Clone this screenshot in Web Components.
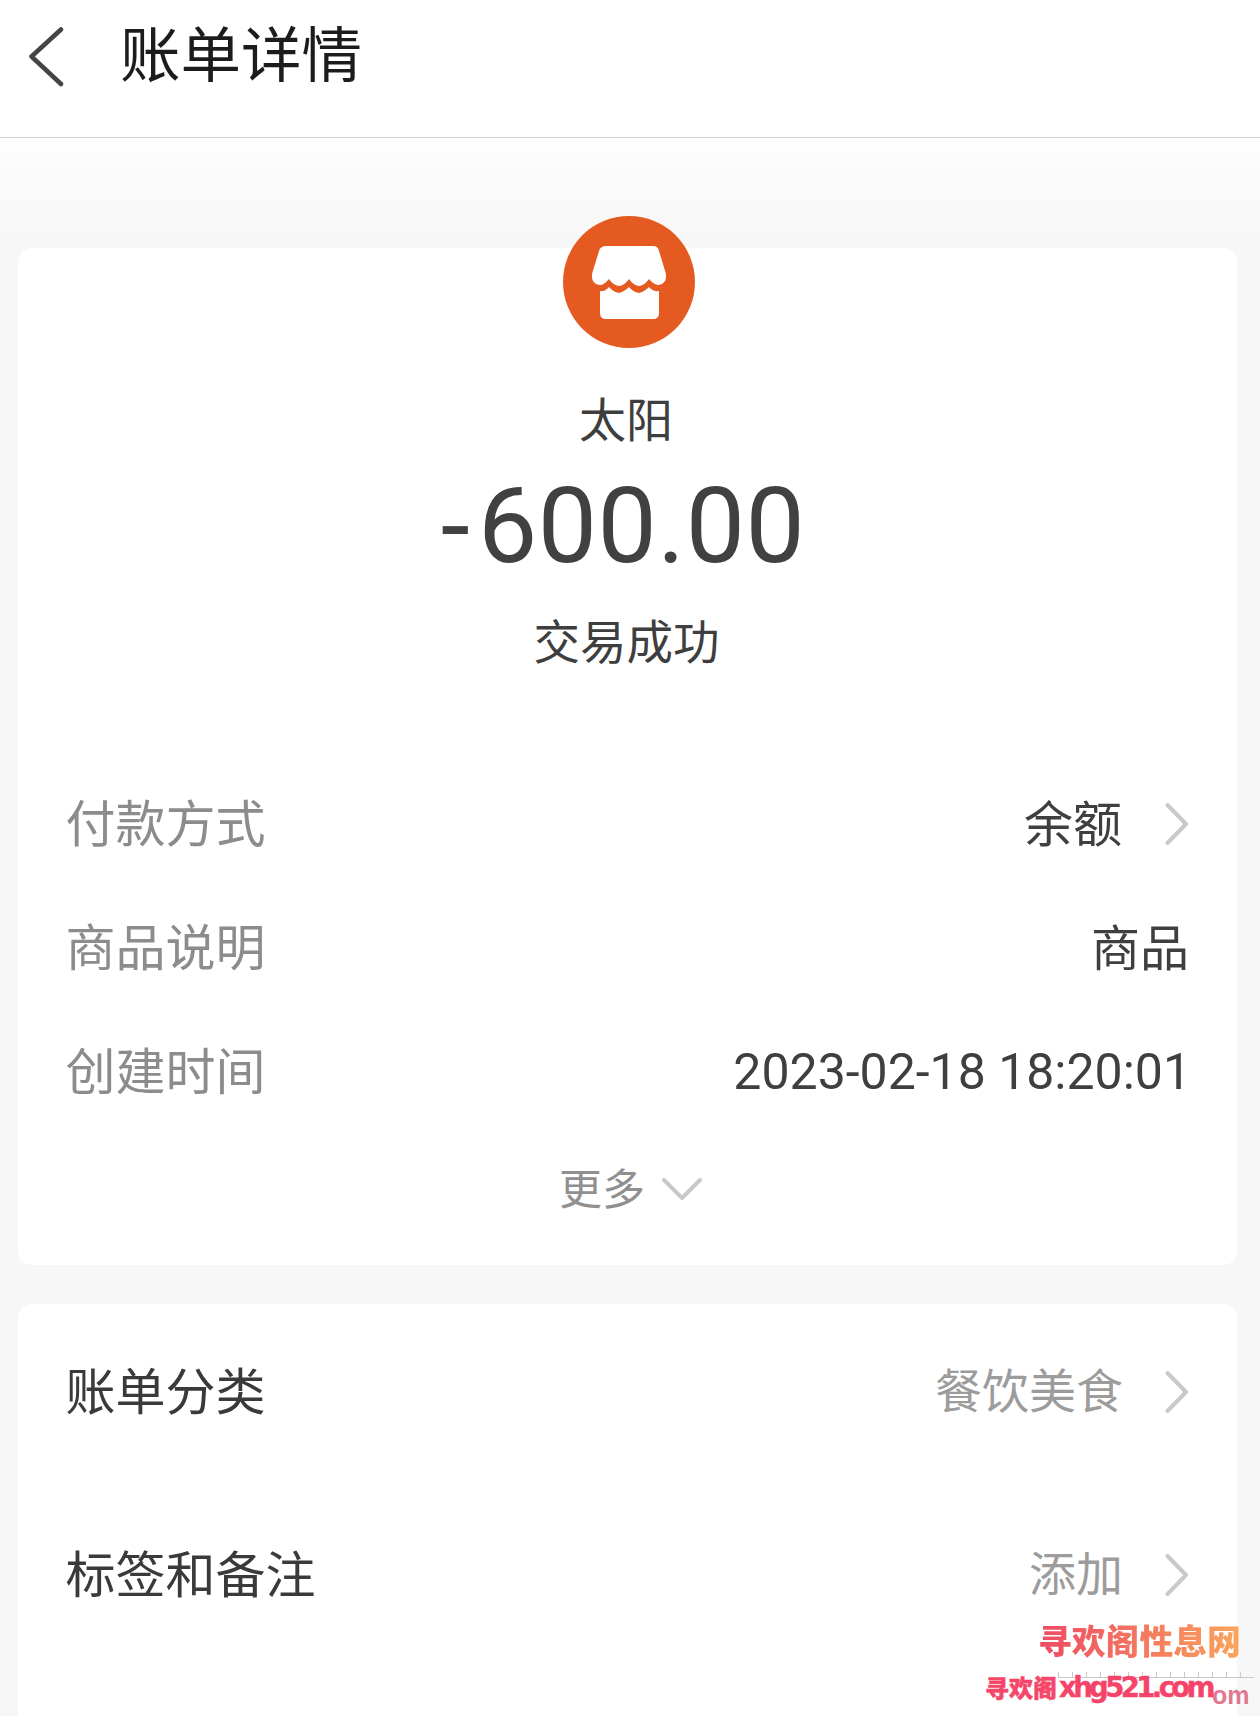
<!doctype html>
<html lang="zh"><head><meta charset="utf-8">
<style>
html,body{margin:0;padding:0}
body{width:1260px;height:1716px;overflow:hidden;position:relative;background:#f7f7f7;font-family:"Noto Sans CJK SC","Noto Sans",sans-serif}
</style></head><body>
<bill-page>
  <bill-header slot="header">账单详情</bill-header>
  <bill-card style="height:1017px">
    <bill-summary name="太阳" amount="-600.00" status="交易成功"></bill-summary>
    <div style="height:89px"></div>
    <bill-row label="付款方式" value="余额" chevron h="124"></bill-row>
    <bill-row label="商品说明" value="商品" h="124"></bill-row>
    <bill-row label="创建时间" value="2023-02-18 18:20:01" h="124"></bill-row>
    <bill-more>更多</bill-more>
  </bill-card>
  <bill-card style="height:440px;margin-top:39px">
    <bill-row label="账单分类" value="餐饮美食" chevron muted dark h="167"></bill-row>
    <bill-row label="标签和备注" value="添加" chevron muted dark h="199"></bill-row>
  </bill-card>
</bill-page>
<bill-watermark></bill-watermark>
<script>
const CJK='"Noto Sans CJK SC","Noto Sans",sans-serif';
const chev='<svg width="24" height="44" viewBox="0 0 24 44" fill="none" style="margin-top:8px"><path d="M2.5 3 L21 22 L2.5 41" stroke="#c9c9c9" stroke-width="4" stroke-linecap="round" stroke-linejoin="round"/></svg>';
function def(name,fn){customElements.define(name,class extends HTMLElement{constructor(){super();this.attachShadow({mode:'open'})}connectedCallback(){fn(this)}})}
def('bill-page',e=>{e.shadowRoot.innerHTML=`<style>
:host{display:block;width:1260px;height:1716px;background:linear-gradient(#fff 138px,#fbfbfb 170px,#f7f7f7 248px)}
main{display:block;padding:110px 23px 0 18px}
</style><slot name="header"></slot><main><slot></slot></main>`});
def('bill-header',e=>{e.shadowRoot.innerHTML=`<style>
:host{display:flex;align-items:center;height:137px;border-bottom:1px solid #d2d2d2;background:#fff;box-sizing:content-box}
svg{margin-left:28px;flex:none;margin-top:-23px}
span{margin-left:56px;font:400 60.5px/1 ${CJK};color:#1c1c1c;margin-top:-34px}
</style><svg width="36" height="60" viewBox="0 0 36 60" fill="none"><path d="M33 2.5 L3.5 29.5 L33 57" stroke="#444" stroke-width="4.5" stroke-linecap="round" stroke-linejoin="round"/></svg><span><slot></slot></span>`});
def('bill-card',e=>{e.shadowRoot.innerHTML=`<style>
:host{display:flow-root;background:#fff;border-radius:14px;box-sizing:border-box}
</style><slot></slot>`});
def('bill-summary',e=>{const a=n=>e.getAttribute(n),amt=a('amount');e.shadowRoot.innerHTML=`<style>
:host{display:flex;flex-direction:column;align-items:center;margin-top:-32px;color:#3e3e3e}
svg{margin-left:2px}
.n{font:400 47px/60px ${CJK};margin-top:39px;margin-left:-3px}
.a{font:400 105.5px/120px Roboto,sans-serif;color:#414141;margin-top:19px;margin-left:-9px;letter-spacing:.5px}
.a i{font-style:normal;letter-spacing:8px}
.s{font:400 46.5px/60px ${CJK};margin-top:23px;margin-left:-2px}
</style><svg width="132" height="132" viewBox="0 0 132 132"><circle cx="66" cy="66" r="66" fill="#e55a20"/>
<path d="M44 30 H90 Q95 30 96 35 L103 58 Q104 68 95 69 Q90 68 86 63 Q81 70 76 70 Q70 69 66 63 Q61 70 56 70 Q50 69 46 63 Q41 69 37 69 Q28 68 29 58 L36 35 Q37 30 44 30 Z" fill="#fff"/>
<path d="M37 75 Q42 76 46 71 Q50 76 56 77 Q61 76 66 71 Q70 76 76 77 Q81 76 86 71 Q90 76 96 75 V97 Q96 103 90 103 H43 Q37 103 37 97 Z" fill="#fff"/></svg>
<div class="n">${a('name')}</div><div class="a"><i>${amt[0]}</i>${amt.slice(1)}</div><div class="s">${a('status')}</div>`});
def('bill-row',e=>{const a=n=>e.getAttribute(n),h=e.hasAttribute('chevron'),m=e.hasAttribute('muted'),d=e.hasAttribute('dark'),num=/^\d/.test(a('value'));e.shadowRoot.innerHTML=`<style>
:host{display:flex;align-items:center;justify-content:space-between;height:${a('h')}px;padding:0 48px 0 47.5px}
.l{font:400 50px/1 ${CJK};color:${d?'#3a3a3a':'#8c8c8c'}}
.r{display:flex;align-items:center;gap:${m?'42px':'43px'}}
.v{font:400 ${num?'50px':(m?'47px':'49px')}/1 ${num?'Roboto,sans-serif':CJK};color:${m?'#9c9c9c':'#3f3f3f'};${num?'margin-top:8px;margin-right:-2px;':''}}
</style><span class="l">${a('label')}</span><span class="r"><span class="v">${a('value')}</span>${h?chev:''}</span>`});
def('bill-more',e=>{e.shadowRoot.innerHTML=`<style>
:host{display:flex;align-items:center;justify-content:center;gap:17px;height:60px;margin-top:26px;padding-left:6px;color:#909090;font:400 43px/1 ${CJK}}
svg{margin-top:6px}
</style><span><slot></slot></span><svg width="40" height="24" viewBox="0 0 40 24" fill="none"><path d="M2 3 L20 21 L38 3" stroke="#c9c9c9" stroke-width="4" stroke-linecap="round" stroke-linejoin="round"/></svg>`});
def('bill-watermark',e=>{e.shadowRoot.innerHTML=`<style>
:host{position:absolute;left:0;top:0;width:1260px;height:1716px;pointer-events:none;display:block}
div{position:absolute;white-space:nowrap}
.a{left:1038px;top:1620px;font:900 33.8px/40px ${CJK};background:linear-gradient(90deg,#ee4a64,#f9a55c);-webkit-background-clip:text;background-clip:text;color:transparent}
.rule{left:1058px;top:1672px;width:196px;height:5px;border-bottom:1px solid #c9c9c9;background:repeating-linear-gradient(90deg,#c9c9c9 0 1px,transparent 1px 14px)}
.o{left:1212px;top:1683px;font:700 25px/24px "Liberation Sans",sans-serif;color:#e0788f}
.b{left:985px;top:1671px;font:900 24px/32px ${CJK};color:#f5476a;-webkit-text-stroke:.5px #f5476a}
.c{left:1059px;top:1670px;font:700 27.5px/34px "DejaVu Sans",sans-serif;color:#f5436a;letter-spacing:-3.6px;-webkit-text-stroke:.4px #f5436a}
</style><div class="rule"></div><div class="a">寻欢阁性息网</div><div class="o">om</div><div class="b">寻欢阁</div><div class="c">xhg521.com</div>`});
</script>
</body></html>
